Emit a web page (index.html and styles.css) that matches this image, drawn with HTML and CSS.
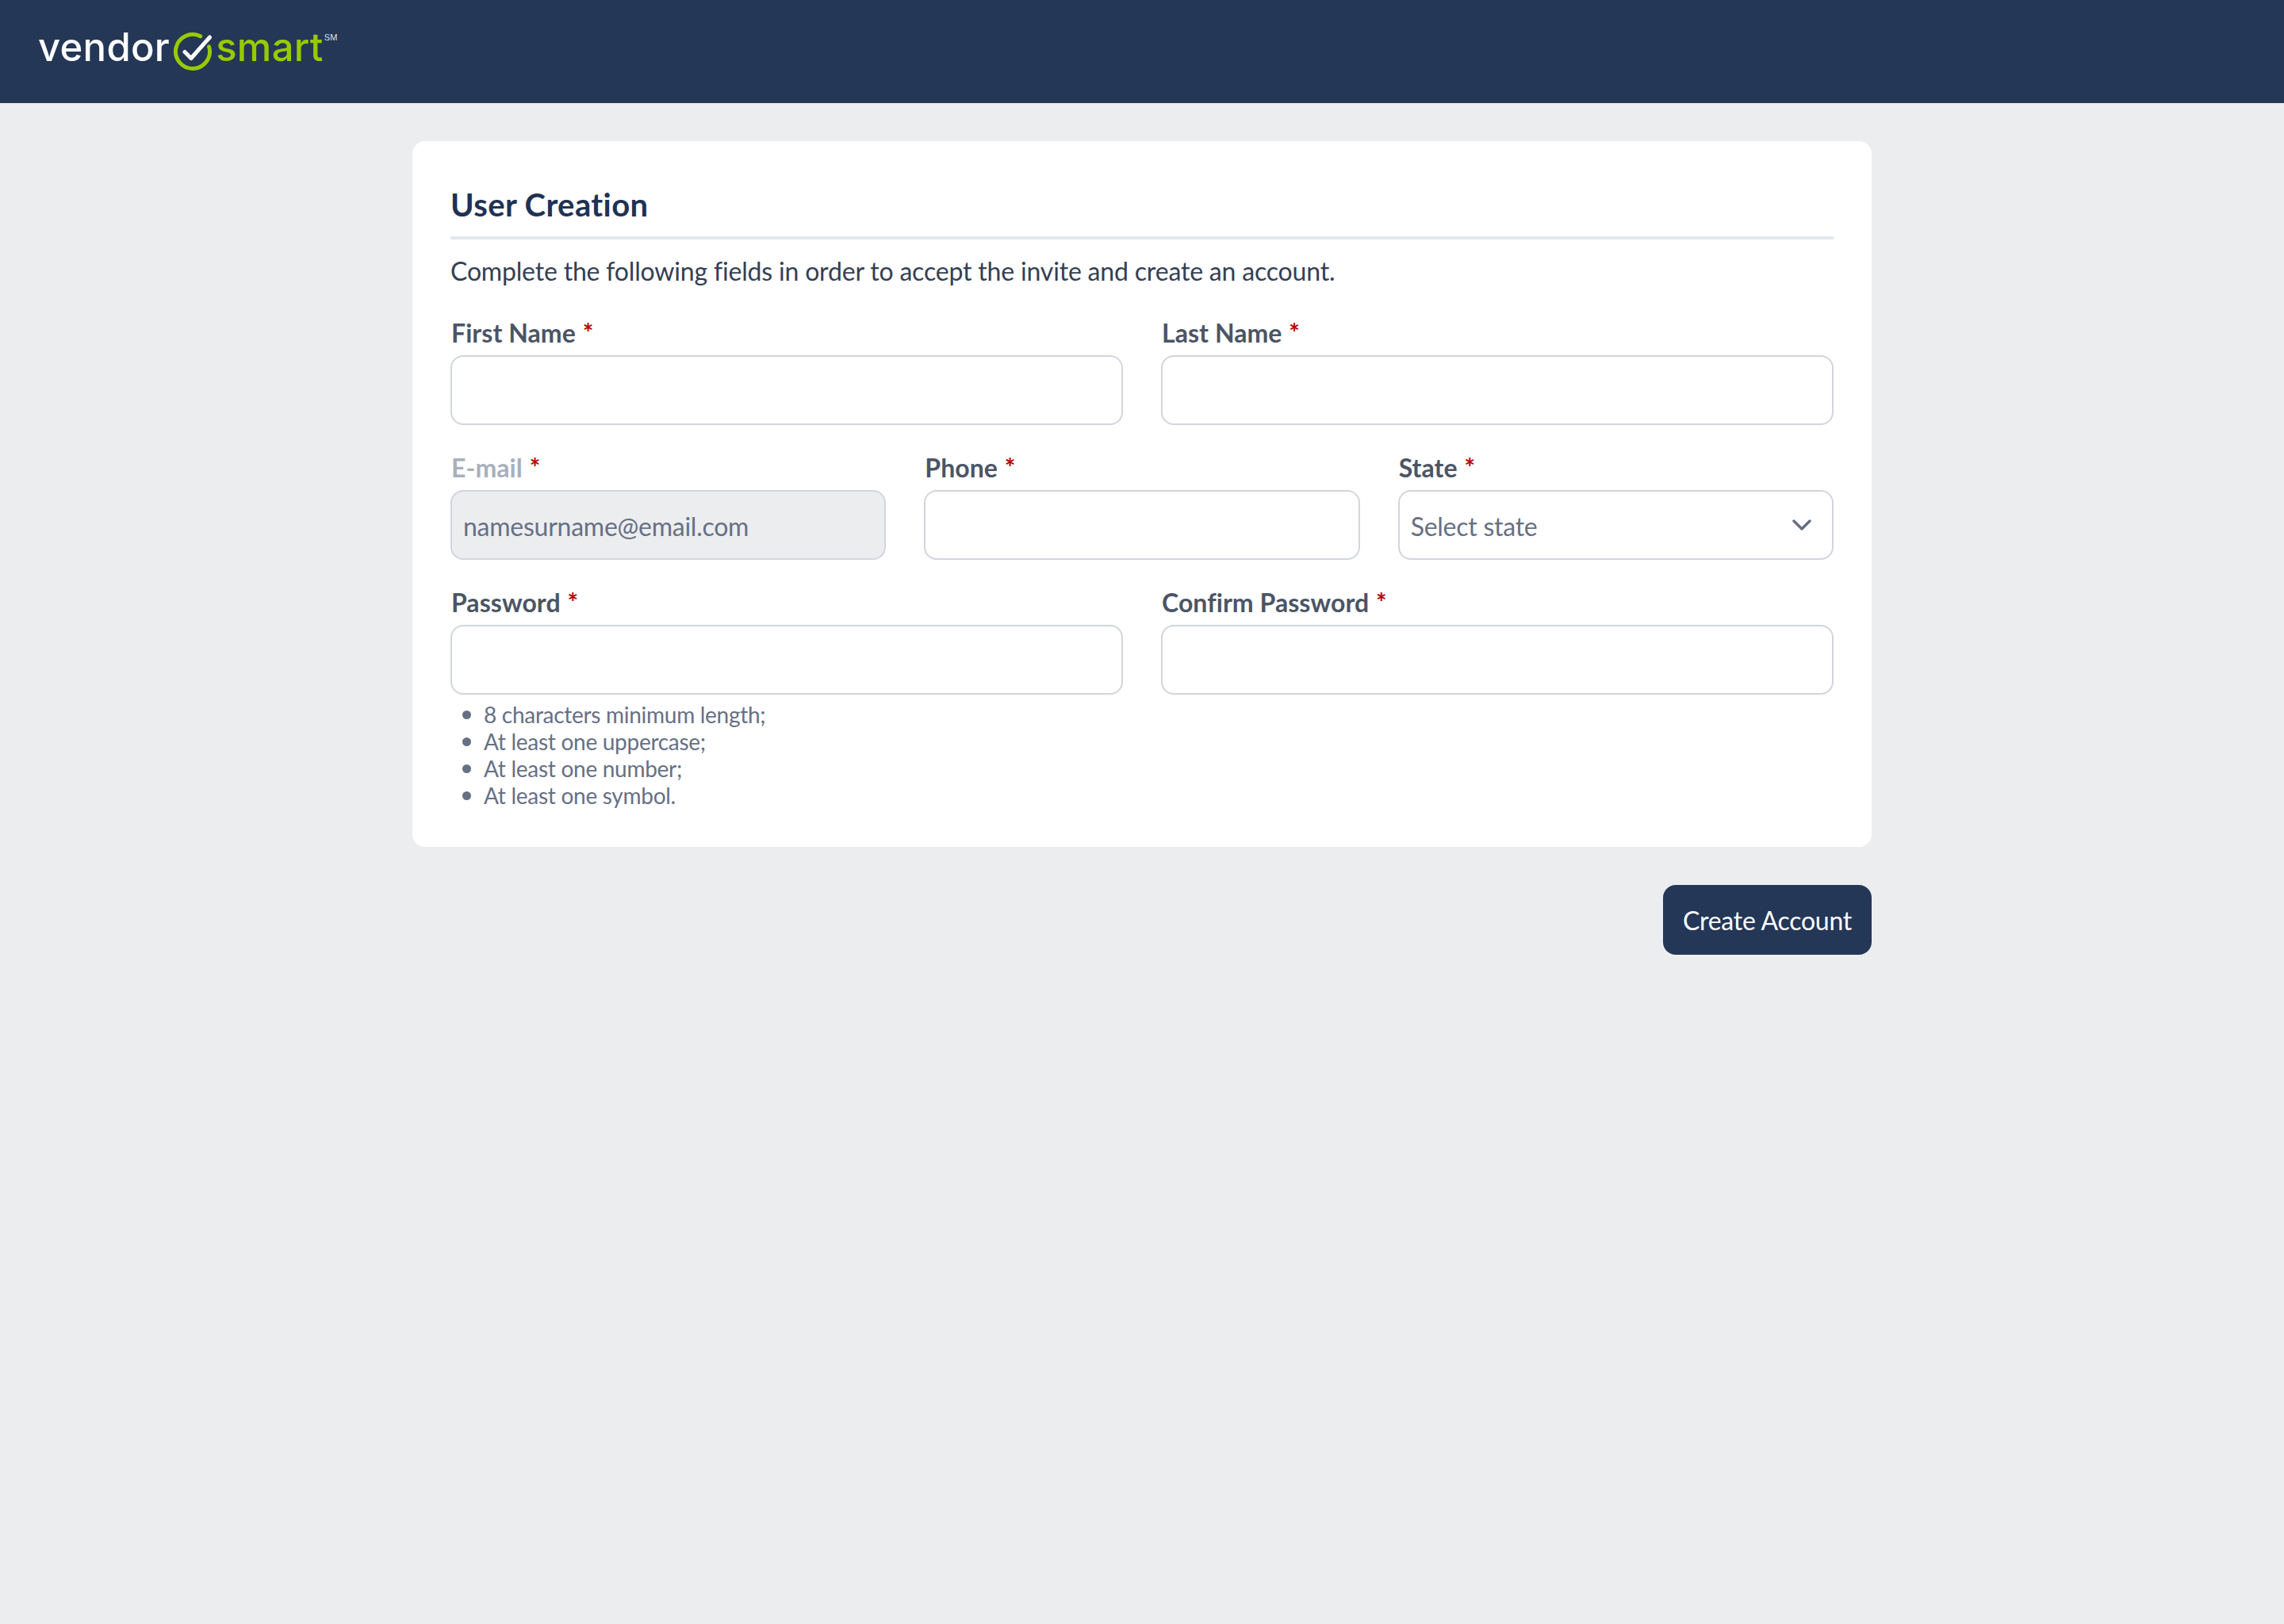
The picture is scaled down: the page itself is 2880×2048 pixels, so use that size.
FILE: index.html
```html
<!DOCTYPE html>
<html lang="en">
<head>
    <meta charset="UTF-8">
    <meta name="viewport" content="width=device-width, initial-scale=1.0">
    <title>User Creation</title>
    <link rel="stylesheet" href="styles.css">
</head>
<body>
    <header class="topbar">
        <div class="logo">
            <span class="logo-vendor">vendor</span>
            <svg class="logo-mark" viewBox="0 0 50 50" width="50" height="50" aria-hidden="true">
                <path d="M45.600 18.900A21.500 21.500 0 1 1 34.700 5.800" fill="none" stroke="#97ca00" stroke-width="5" stroke-linecap="round"/>
                <path d="M15 25.500L23 33.500L46.500 7" fill="none" stroke="#fff" stroke-width="5" stroke-linecap="round" stroke-linejoin="round"/>
            </svg>
            <span class="logo-smart">smart</span>
            <span class="logo-sm">SM</span>
        </div>
    </header>

    <main class="page">
        <form class="card">
            <h2 class="card-title">User Creation</h2>
            <p class="intro">Complete the following fields in order to accept the invite and create an account.</p>

            <div class="row row-2">
                <div class="field">
                    <label>First Name <span class="req">*</span></label>
                    <input type="text">
                </div>
                <div class="field">
                    <label>Last Name <span class="req">*</span></label>
                    <input type="text">
                </div>
            </div>

            <div class="row row-3">
                <div class="field field-disabled">
                    <label>E-mail <span class="req">*</span></label>
                    <input type="text" value="namesurname@email.com" disabled>
                </div>
                <div class="field">
                    <label>Phone <span class="req">*</span></label>
                    <input type="text">
                </div>
                <div class="field">
                    <label>State <span class="req">*</span></label>
                    <div class="select-wrap">
                        <select>
                            <option>Select state</option>
                        </select>
                        <svg class="chevron" viewBox="0 0 24 14" width="24" height="14" aria-hidden="true">
                            <path d="M2 2l10 10L22 2" fill="none" stroke="#667085" stroke-width="3.500" stroke-linecap="round" stroke-linejoin="round"/>
                        </svg>
                    </div>
                </div>
            </div>

            <div class="row row-2">
                <div class="field">
                    <label>Password <span class="req">*</span></label>
                    <input type="password">
                    <ul class="hints">
                        <li>8 characters minimum length;</li>
                        <li>At least one uppercase;</li>
                        <li>At least one number;</li>
                        <li>At least one symbol.</li>
                    </ul>
                </div>
                <div class="field">
                    <label>Confirm Password <span class="req">*</span></label>
                    <input type="password">
                </div>
            </div>
        </form>

        <div class="actions">
            <button class="btn" type="button">Create Account</button>
        </div>
    </main>
</body>
</html>
```

FILE: styles.css
```css
* {
    margin: 0;
    padding: 0;
    box-sizing: border-box;
}
body {
    background: #ecedef;
    font-family: "Lato", "Liberation Sans", sans-serif;
    min-height: 2048px;
}
.topbar {
    background: #243757;
    height: 130px;
    padding-left: 48px;
    display: flex;
    align-items: flex-start;
}
.logo {
    display: flex;
    align-items: flex-start;
    padding-top: 35px;
    font-family: "Inter", sans-serif;
    font-size: 49px;
    font-weight: 500;
    line-height: 50px;
    letter-spacing: 0.3px;
}
.logo-vendor {
    color: #fff;
}
.logo-mark {
    margin-left: 4px;
    margin-right: 4px;
    margin-top: 5px;
}
.logo-smart {
    color: #97ca00;
}
.logo-sm {
    color: #dfe3e8;
    font-family: "Liberation Sans", sans-serif;
    font-size: 11px;
    font-weight: 400;
    line-height: 11px;
    letter-spacing: 0;
    margin-left: 1px;
    margin-top: 7px;
}
.page {
    width: 1840px;
    margin: 48px auto 0;
}
.card {
    background: #fff;
    border-radius: 16px;
    padding: 50px 48px 48px;
}
.card-title {
    font-size: 40px;
    line-height: 60px;
    font-weight: 700;
    letter-spacing: 0.4px;
    color: #1f3254;
    padding-bottom: 10px;
    border-bottom: 4px solid #e2e8f0;
}
.intro {
    font-size: 32px;
    line-height: 48px;
    letter-spacing: -0.18px;
    color: #344054;
    margin-top: 16px;
    margin-bottom: 34px;
}
.row {
    display: grid;
    column-gap: 48px;
    margin-bottom: 34px;
}
.row:last-child {
    margin-bottom: 0;
}
.row-2 {
    grid-template-columns: repeat(2, 1fr);
}
.row-3 {
    grid-template-columns: repeat(3, 1fr);
}
.field label {
    display: block;
    padding-left: 1px;
    font-size: 32px;
    line-height: 40px;
    font-weight: 700;
    letter-spacing: 0.06px;
    color: #4b5565;
    margin-bottom: 8px;
}
.req {
    color: #b80000;
    margin-left: 1px;
}
.field input,
.field select {
    display: block;
    width: 100%;
    height: 88px;
    border: 2px solid #d2d5dd;
    border-radius: 16px;
    background: #fff;
    padding: 2px 14px 0;
    font-family: inherit;
    font-size: 32px;
    letter-spacing: -0.25px;
    color: #667085;
    outline: none;
}
.field select {
    appearance: none;
    -webkit-appearance: none;
}
.field-disabled label {
    color: #a8b0bd;
}
.field-disabled input {
    background: #ecedef;
    opacity: 1;
    -webkit-text-fill-color: #667085;
}
.select-wrap {
    position: relative;
}
.chevron {
    position: absolute;
    right: 28px;
    top: 37px;
}
.hints {
    list-style: none;
    margin-top: 8px;
    padding-left: 15px;
    font-size: 28px;
    line-height: 34px;
    letter-spacing: -0.28px;
    color: #667085;
}
.hints li {
    display: flex;
    align-items: center;
    gap: 16px;
}
.hints li::before {
    content: "";
    width: 11px;
    height: 11px;
    border-radius: 50%;
    background: #667085;
}
.actions {
    display: flex;
    justify-content: flex-end;
    margin-top: 48px;
}
.btn {
    height: 88px;
    padding: 0 25px;
    border: 0;
    border-radius: 16px;
    background: #243757;
    color: #fff;
    font-family: inherit;
    font-size: 32px;
    letter-spacing: -0.25px;
}
```
